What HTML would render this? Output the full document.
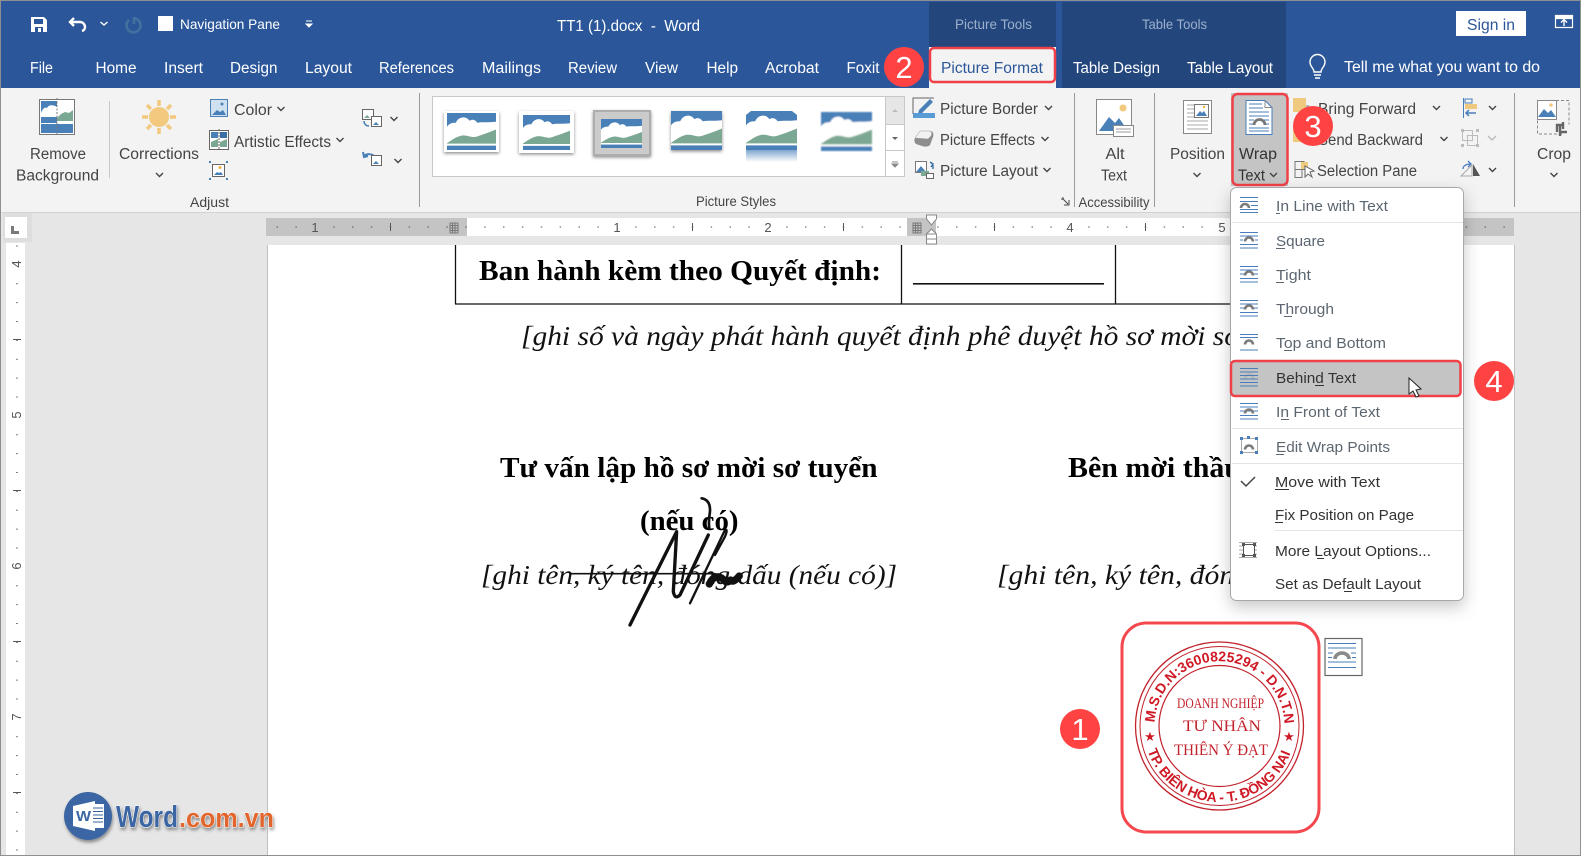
<!DOCTYPE html>
<html><head><meta charset="utf-8"><title>TT1 (1).docx - Word</title>
<style>
html,body{margin:0;padding:0;background:#e6e6e6;overflow:hidden}
svg{display:block}
text{font-family:"Liberation Sans",sans-serif;font-size:15px;fill:#444}
.tab{fill:#fff;font-size:15.5px}
.rb{fill:#444;font-size:15.5px}
.m{fill:#5c6670;font-size:15px}
.d{fill:#333;font-size:15px}
.grp{fill:#444;font-size:14px}
.num{fill:#555;font-size:13px}
.doc{font-family:"Liberation Serif",serif;fill:#000;font-weight:bold;font-size:29px}
.it{font-family:"Liberation Serif",serif;fill:#111;font-style:italic;font-size:27px}
.bd{fill:#fff;font-size:31px;text-anchor:middle}
.st{font-family:"Liberation Serif",serif;fill:#c2222c}
.sa{fill:#cf1a26;font-weight:bold;font-size:14px}
</style></head><body>
<svg width="1581" height="856" viewBox="0 0 1581 856" xmlns="http://www.w3.org/2000/svg">
<defs>
<symbol id="ch" viewBox="0 0 9 6" overflow="visible"><path d="M1 1l3.5 3.5L8 1" fill="none" stroke="#444" stroke-width="1.4"/></symbol>
<symbol id="th" viewBox="0 0 50 38" preserveAspectRatio="none">
<rect width="50" height="38" fill="#4a80b8"/>
<path fill="#fff" d="M0 14C3 10 6 10 9 10C12 3 20 3 23 8C26 6 29 7 31 10C36 9 42 10 50 9V34H0Z"/>
<path fill="#7ba892" d="M0 31C6 27 10 24 16 23C22 23 26 26 31 24C37 22 43 20 50 17V31.5H0Z"/>
<rect y="33.5" width="50" height="4.5" fill="#4a80b8"/>
</symbol>
<filter id="sh" x="-20%" y="-20%" width="140%" height="150%"><feDropShadow dx="0" dy="1.5" stdDeviation="1.5" flood-color="#000" flood-opacity=".45"/></filter>
<filter id="bl" x="-20%" y="-20%" width="140%" height="140%"><feGaussianBlur stdDeviation=".9"/></filter>
<filter id="menu" x="-15%" y="-10%" width="130%" height="125%"><feDropShadow dx="0" dy="6" stdDeviation="8" flood-color="#000" flood-opacity=".22"/></filter>
<filter id="ls" x="-10%" y="-20%" width="120%" height="160%"><feDropShadow dx="1" dy="2.5" stdDeviation="1.6" flood-color="#000" flood-opacity=".4"/></filter>
<linearGradient id="rf" x1="0" y1="0" x2="0" y2="1"><stop offset="0" stop-color="#7fa6cf"/><stop offset="1" stop-color="#fff"/></linearGradient>
<path id="arch" d="M5 11.5a4 4 0 0 1 8 0" fill="none" stroke="#7b7b7b" stroke-width="2.6"/>
<path id="top" d="M0 3.5h18M0 7h18" stroke="#4a7ebb" stroke-width="1" fill="none"/>
<path id="bot" d="M0 15.5h18M0 19h18" stroke="#4a7ebb" stroke-width="1" fill="none"/>
<path id="tarc" d="M1154.6 722.600A65 65 0 0 1 1284.400 722.600" fill="none"/>
<path id="barc" d="M1147.6 750.7A76 76 0 0 0 1291.4 750.7" fill="none"/>
</defs>

<!-- base -->
<rect width="1581" height="856" fill="#e6e6e6"/>
<rect width="1581" height="88" fill="#2b579a"/>
<rect y="88" width="1581" height="124" fill="#f3f3f3"/>
<rect y="212" width="1581" height="1" fill="#d2d2d2"/>

<!-- context tabs -->
<rect x="929" y="2" width="127" height="45" fill="#23467d"/>
<rect x="1062" y="2" width="224" height="86" fill="#23467d"/>
<rect x="929" y="47" width="127" height="42" fill="#f3f3f3"/>
<text x="955" y="29" textLength="77" lengthAdjust="spacingAndGlyphs" style="fill:#9db0cc;font-size:14px">Picture Tools</text>
<text x="1142" y="29" textLength="65" lengthAdjust="spacingAndGlyphs" style="fill:#9db0cc;font-size:14px">Table Tools</text>

<!-- QAT -->
<path d="M31 17h13l3 3v12H31z" fill="#fff"/><rect x="34" y="19" width="9" height="5" fill="#2b579a"/><rect x="35" y="27" width="8" height="5" fill="#2b579a"/><rect x="38" y="28" width="3" height="4" fill="#fff"/>
<path d="M74 18l-4 4 4 4M70 22h10a5 5 0 0 1 5 5 4 4 0 0 1-3 4" fill="none" stroke="#fff" stroke-width="2.4"/>
<path d="M100.500 22l3.500 3 3.500-3" fill="none" stroke="#fff" stroke-width="1.400"/>
<path d="M135 18.500a7 7 0 1 1-6 1.500M134 17v7" fill="none" stroke="#44709f" stroke-width="2.600"/>
<rect x="158" y="16" width="15" height="15" fill="#fff"/>
<text x="180" y="29" textLength="100" lengthAdjust="spacingAndGlyphs" style="fill:#fff;font-size:14px">Navigation Pane</text>
<path d="M306 21h6M306 24h6l-3 3z" stroke="#fff" fill="#fff" stroke-width="1"/>
<text x="557" y="31" textLength="143" lengthAdjust="spacingAndGlyphs" style="fill:#fff;font-size:16px">TT1 (1).docx&#160;&#160;-&#160;&#160;Word</text>

<!-- tabs -->
<text class="tab" x="30" y="73" textLength="23" lengthAdjust="spacingAndGlyphs">File</text>
<text class="tab" x="95.500" y="73" textLength="41" lengthAdjust="spacingAndGlyphs">Home</text>
<text class="tab" x="164" y="73" textLength="39" lengthAdjust="spacingAndGlyphs">Insert</text>
<text class="tab" x="230" y="73" textLength="47.500" lengthAdjust="spacingAndGlyphs">Design</text>
<text class="tab" x="305" y="73" textLength="47" lengthAdjust="spacingAndGlyphs">Layout</text>
<text class="tab" x="379" y="73" textLength="75" lengthAdjust="spacingAndGlyphs">References</text>
<text class="tab" x="482" y="73" textLength="59" lengthAdjust="spacingAndGlyphs">Mailings</text>
<text class="tab" x="568" y="73" textLength="49" lengthAdjust="spacingAndGlyphs">Review</text>
<text class="tab" x="645" y="73" textLength="33" lengthAdjust="spacingAndGlyphs">View</text>
<text class="tab" x="706.500" y="73" textLength="31.500" lengthAdjust="spacingAndGlyphs">Help</text>
<text class="tab" x="765" y="73" textLength="54" lengthAdjust="spacingAndGlyphs">Acrobat</text>
<text class="tab" x="846.500" y="73" textLength="33" lengthAdjust="spacingAndGlyphs">Foxit</text>
<text x="941" y="73" textLength="102" lengthAdjust="spacingAndGlyphs" style="fill:#2b579a;font-size:15.5px">Picture Format</text>
<text class="tab" x="1073" y="73" textLength="87" lengthAdjust="spacingAndGlyphs">Table Design</text>
<text class="tab" x="1187" y="73" textLength="86" lengthAdjust="spacingAndGlyphs">Table Layout</text>
<rect x="930" y="48" width="125" height="34" rx="4" fill="none" stroke="#f04048" stroke-width="2.500"/>

<!-- sign in etc -->
<rect x="1456" y="11" width="70" height="25" fill="#fff"/>
<text x="1467" y="30" textLength="48" lengthAdjust="spacingAndGlyphs" style="fill:#2b579a;font-size:16px">Sign in</text>
<path d="M1555.500 15.500h17v12h-17zM1555.500 18.500h17" fill="none" stroke="#fff" stroke-width="1.200"/><path d="M1564 26v-6M1561 22.500l3-3 3 3" fill="none" stroke="#fff" stroke-width="1.400"/><rect x="1555" y="15" width="18" height="3" fill="#fff"/>
<path d="M1314 72c0-4-4-5-4-10a7.500 7.500 0 0 1 15 0c0 5-4 6-4 10zM1314 75h7M1315 78h5" fill="none" stroke="#fff" stroke-width="1.400"/>
<text x="1344" y="72" textLength="196" lengthAdjust="spacingAndGlyphs" style="fill:#fff;font-size:15.500px">Tell me what you want to do</text>

<!-- Adjust group -->
<rect x="39.500" y="99.500" width="35" height="35" fill="#fff" stroke="#777"/>
<rect x="41" y="101" width="16" height="22" fill="#4a80b8"/><path d="M41 113c2-5 4-6 6-5 2-4 7-3 10-1v10H41z" fill="#fff"/>
<path d="M57 118l4-4 4-2 4 1 4-3v11H57z" fill="#7ba892"/><rect x="41" y="124" width="32" height="9" fill="#4a80b8"/>
<path d="M57 98v38" stroke="#777" stroke-dasharray="2 1.500"/>
<text class="rb" x="30" y="159" textLength="56" lengthAdjust="spacingAndGlyphs">Remove</text>
<text class="rb" x="16" y="180.500" textLength="83" lengthAdjust="spacingAndGlyphs">Background</text>
<rect x="109" y="101" width="1" height="77" fill="#c8c8c8"/>
<circle cx="159" cy="117" r="10" fill="#f2c97e"/>
<path d="M159 100v6M159 128v6M142 117h6M170 117h6M147 105l4 4M171 105l-4 4M147 129l4-4M171 129l-4-4" stroke="#f2c97e" stroke-width="3.500"/>
<text class="rb" x="119" y="159" textLength="80" lengthAdjust="spacingAndGlyphs">Corrections</text>
<use href="#ch" x="155" y="172" width="9" height="6"/>
<rect x="210.500" y="99.500" width="17" height="17" fill="#cfe0f0" stroke="#4a80b8"/><path d="M212 115l5-5 3 2 3-2 3 5z" fill="#4a80b8"/><circle cx="222" cy="104" r="1.500" fill="#4a80b8"/>
<text class="rb" x="234" y="115" textLength="38" lengthAdjust="spacingAndGlyphs">Color</text>
<use href="#ch" x="276.500" y="106" width="9" height="6"/>
<rect x="209.500" y="130.500" width="19" height="19" fill="#fff" stroke="#666"/><path d="M211 132h7v6h-7z" fill="#4a80b8"/><path d="M211 142l7-3v8h-7z" fill="#7ba892"/><path d="M220 132h7v6h-7z" fill="#3a6fa5"/><path d="M220 142l7-3v8h-7z" fill="#7ba892"/><path d="M219 129v21" stroke="#666" stroke-dasharray="2 1"/>
<text class="rb" x="234" y="147" textLength="97" lengthAdjust="spacingAndGlyphs">Artistic Effects</text>
<use href="#ch" x="335.500" y="137" width="9" height="6"/>
<rect x="212.500" y="164.500" width="12" height="12" fill="#fff" stroke="#666"/><path d="M214 175l3-3 2 1 2-1 2 3z" fill="#4a80b8"/><circle cx="220" cy="167.500" r="1.500" fill="#f2b040"/>
<path d="M209 161h2v2h-2zM226 161h2v2h-2zM209 178h2v2h-2zM226 178h2v2h-2z" fill="#4a80b8"/>
<text class="grp" x="190" y="207" textLength="39" lengthAdjust="spacingAndGlyphs">Adjust</text>
<rect x="362.500" y="109.500" width="11" height="10" fill="#fff" stroke="#666"/><rect x="371.500" y="116.500" width="10" height="10" fill="#fff" stroke="#666"/><path d="M364 118l3-3 3 3z" fill="#7ba892"/><path d="M373 125l3-3 3 3z" fill="#4a80b8"/><path d="M364 121c0 3 2 5 5 5" fill="none" stroke="#4a80b8" stroke-width="1.500"/>
<use href="#ch" x="389.500" y="116" width="9" height="6"/>
<path d="M364 156a7 6 0 0 1 11 1M363 152l1 5 4-1" fill="none" stroke="#4a80b8" stroke-width="2"/><rect x="371.500" y="155.500" width="10" height="10" fill="#fff" stroke="#666"/><path d="M373 164l3-3 3 3z" fill="#4a80b8"/>
<use href="#ch" x="393.500" y="158" width="9" height="6"/>
<rect x="419" y="93" width="1" height="114" fill="#9a9a9a"/>

<!-- gallery -->
<rect x="432.500" y="96.500" width="472" height="80" fill="#fff" stroke="#c8c8c8"/>
<rect x="885.500" y="96.500" width="19" height="28" fill="#e6e6e6" stroke="#c8c8c8"/>
<rect x="885.500" y="124.500" width="19" height="26" fill="#fff" stroke="#c8c8c8"/>
<rect x="885.500" y="150.500" width="19" height="26" fill="#fff" stroke="#c8c8c8"/>
<path d="M892 112l3-3 3 3z" fill="#bdbdbd"/><path d="M892 137h6l-3 3z" fill="#666"/><path d="M892 162h6M892 164h6l-3 3z" stroke="#888" fill="#888" stroke-width="1"/>
<rect x="444" y="111" width="55" height="41" fill="#fff" filter="url(#sh)"/><use href="#th" x="447" y="113" width="49" height="37"/>
<rect x="519" y="111" width="55" height="42" fill="#fff" filter="url(#sh)"/><use href="#th" x="523" y="115" width="47" height="35"/>
<rect x="594" y="111" width="56" height="44" fill="#cbcbcb" stroke="#adadad" stroke-width="2" filter="url(#sh)"/><use href="#th" x="601" y="119" width="41" height="29"/>
<g filter="url(#sh)"><use href="#th" x="671" y="111" width="51" height="39"/></g>
<rect x="746" y="150" width="51" height="12" fill="url(#rf)"/>
<use href="#th" x="746" y="111" width="51" height="39"/><path d="M746 111h5l-5 4zM797 111h-5l5 4z" fill="#fff"/>
<g filter="url(#bl)"><use href="#th" x="821" y="112" width="51" height="39"/></g>

<!-- picture styles buttons -->
<path d="M913 114v-16h21" fill="none" stroke="#666"/><path d="M919 110l11-11 3 3-11 11-4 1z" fill="#4a80b8"/><rect x="913" y="113" width="22" height="5" fill="#5b9bd5"/>
<text class="rb" x="940" y="114" textLength="98" lengthAdjust="spacingAndGlyphs">Picture Border</text>
<use href="#ch" x="1044" y="105" width="9" height="6"/>
<path d="M920 131h10c3 0 4 3 3 6l-3 8c-2 2-5 2-8 1l-6-2c-2-2-2-4-1-6z" fill="#8e8e8e"/><path d="M920 131h10c2 1 2 3 1 5l-3 3-13-1z" fill="#f2f2f2" stroke="#999" stroke-width=".5"/>
<text class="rb" x="940" y="145" textLength="95" lengthAdjust="spacingAndGlyphs">Picture Effects</text>
<use href="#ch" x="1040.500" y="136" width="9" height="6"/>
<rect x="915.500" y="161.500" width="11" height="11" fill="#fff" stroke="#777"/><path d="M916 172l5-6 5 6z" fill="#4a80b8"/><rect x="921" y="171" width="8" height="5" fill="#7ba892"/><rect x="926.500" y="173.500" width="7" height="5" fill="#fff" stroke="#666"/><path d="M930 162l3 2-2 3M933 165v4" fill="none" stroke="#3a6fa5" stroke-width="1.400"/>
<text class="rb" x="940" y="176" textLength="98" lengthAdjust="spacingAndGlyphs">Picture Layout</text>
<use href="#ch" x="1042.500" y="167" width="9" height="6"/>
<text class="grp" x="696" y="206" textLength="80" lengthAdjust="spacingAndGlyphs">Picture Styles</text>
<path d="M1062 198h2M1062 198v2M1063 199l5 5M1069 200v5h-5" fill="none" stroke="#444"/>
<rect x="1074" y="93" width="1" height="114" fill="#9a9a9a"/>
<text class="grp" x="1078.500" y="207" textLength="71" lengthAdjust="spacingAndGlyphs">Accessibility</text>
<rect x="1154" y="93" width="1" height="114" fill="#9a9a9a"/>

<!-- alt text -->
<rect x="1096.500" y="99.500" width="35" height="35" fill="#fff" stroke="#888"/><circle cx="1123" cy="108" r="3.500" fill="#f2c97e"/><path d="M1099 131l10-14 6 6 4-5 9 13z" fill="#4a80b8"/>
<rect x="1113.500" y="125.500" width="20" height="11" fill="#fff" stroke="#888"/><path d="M1116 129h15M1116 132h15" stroke="#999"/>
<text class="rb" x="1105.500" y="159" textLength="19" lengthAdjust="spacingAndGlyphs">Alt</text>
<text class="rb" x="1101" y="180.500" textLength="26" lengthAdjust="spacingAndGlyphs">Text</text>

<!-- position -->
<rect x="1183.500" y="100.500" width="28" height="33" fill="#fff" stroke="#888"/><path d="M1187 105h8M1187 109h8M1187 113h8M1187 117h8M1187 121h21M1187 125h21M1187 129h21" stroke="#aaa"/><rect x="1194.500" y="104.500" width="14" height="13" fill="#fff" stroke="#777"/><path d="M1196 116l4-5 2 2 2-2 3 5z" fill="#4a80b8"/><circle cx="1204" cy="107" r="1.200" fill="#f2b040"/>
<text class="rb" x="1170" y="159" textLength="55" lengthAdjust="spacingAndGlyphs">Position</text>
<use href="#ch" x="1192.500" y="172" width="9" height="6"/>

<!-- wrap text -->
<rect x="1231" y="93" width="57" height="93" fill="#c4c4c4"/>
<path d="M1246 100.500h19l7 7v27h-26z" fill="#fff" stroke="#4a7ebb"/><path d="M1265 100.500v7h7" fill="none" stroke="#888"/>
<path d="M1249 104h13M1249 108h14M1249 112h20M1249 116h20M1249 120h5M1264 120h5M1249 124h4M1265 124h4M1249 128h20M1249 131h20" stroke="#4a7ebb"/>
<path d="M1254 125a5.500 5.500 0 0 1 11 0" fill="none" stroke="#777" stroke-width="2.800"/>
<text class="rb" x="1239" y="159" textLength="38" lengthAdjust="spacingAndGlyphs" style="fill:#333">Wrap</text>
<text class="rb" x="1238" y="180.500" textLength="27" lengthAdjust="spacingAndGlyphs" style="fill:#333">Text</text>
<use href="#ch" x="1269" y="172" width="9" height="6"/>
<rect x="1232.500" y="94" width="55" height="91" rx="5" fill="none" stroke="#f04048" stroke-width="2.500"/>

<!-- arrange -->
<rect x="1293" y="98" width="13" height="14" fill="#eec97e"/><path d="M1306 106h3" stroke="#777"/>
<rect x="1293" y="128" width="13" height="14" fill="#eec97e"/><path d="M1301 131h9v10h-9z" fill="none" stroke="#777"/>
<text class="rb" x="1318" y="114" textLength="98" lengthAdjust="spacingAndGlyphs">Bring Forward</text>
<use href="#ch" x="1432" y="105" width="9" height="6"/>
<text class="rb" x="1318" y="145" textLength="105" lengthAdjust="spacingAndGlyphs">Send Backward</text>
<use href="#ch" x="1439.500" y="136" width="9" height="6"/>
<path d="M1295 161.500h9v8h-9zM1295 169.500h7v8h-7z" fill="none" stroke="#777"/><rect x="1301" y="162" width="7" height="7" fill="#eec97e"/><path d="M1305 166v11l3-3 4 3-2-5 4-1z" fill="#fff" stroke="#666"/>
<text class="rb" x="1317" y="176" textLength="100" lengthAdjust="spacingAndGlyphs">Selection Pane</text>
<path d="M1463.500 98v20M1465 99h7v4h-7z" fill="none" stroke="#4a7ebb"/><rect x="1465" y="104" width="12" height="5" fill="#eec97e"/><path d="M1466 113h10M1469 110l-3 3 3 3" fill="none" stroke="#4a7ebb" stroke-width="1.500"/>
<use href="#ch" x="1488" y="105" width="9" height="6"/>
<rect x="1462.500" y="130.500" width="10" height="10" fill="none" stroke="#bbb"/><rect x="1467.500" y="135.500" width="10" height="10" fill="none" stroke="#bbb"/><path d="M1461 129h3v3h-3zM1476 129h3v3h-3zM1461 144h3v3h-3zM1476 144h3v3h-3z" fill="#bbb"/>
<path d="M1488 136l4 4 4-4" fill="none" stroke="#bbb" stroke-width="1.400"/>
<path d="M1461 176l11-11v11z" fill="none" stroke="#aaa"/><path d="M1473 164l7 12h-7z" fill="#555"/><path d="M1463 169c0-3 3-5 7-5M1468 161l3 3-3 3" fill="none" stroke="#4a7ebb" stroke-width="1.300"/>
<use href="#ch" x="1488" y="167" width="9" height="6"/>
<rect x="1514" y="93" width="1" height="114" fill="#9a9a9a"/>
<rect x="1537.500" y="100.500" width="19" height="19" fill="#fff" stroke="#888"/><path d="M1538 117l6-8 4 4 3-3 5 7z" fill="#4a80b8"/><circle cx="1551" cy="105" r="1.800" fill="#f2c97e"/>
<path d="M1556 100.500h13v24M1562 134h-24.500v-14" fill="none" stroke="#888" stroke-dasharray="3 2"/>
<path d="M1563 125h-6v7M1560 125v7h7M1563 122v7M1560 132v4" fill="none" stroke="#666" stroke-width="2.400"/>
<text class="rb" x="1537" y="159" textLength="34" lengthAdjust="spacingAndGlyphs">Crop</text>
<use href="#ch" x="1549.500" y="172" width="9" height="6"/>

<!-- rulers -->
<rect x="3" y="213" width="29" height="29" fill="#dedede"/><rect x="5" y="217" width="22" height="21" fill="#fff"/><path d="M11 226h3v5h5v3h-8z" fill="#7a7a7a"/>
<rect x="266" y="218" width="1248" height="18" fill="#c4c4c4"/>
<rect x="467" y="218" width="440" height="18" fill="#fff"/>
<rect x="936" y="218" width="304" height="18" fill="#fff"/>
<path d="M276.500 227H1514" stroke="#555" stroke-width="1" stroke-dasharray="1.500 17.375" fill="none"/>
<path d="M390.500 223v8M692.500 223v8M843.500 223v8M994.500 223v8M1145.500 223v8" stroke="#555"/>
<rect x="309" y="220" width="12" height="14" fill="#c4c4c4"/><rect x="611" y="220" width="12" height="14" fill="#fff"/><rect x="762" y="220" width="12" height="14" fill="#fff"/><rect x="1064" y="220" width="12" height="14" fill="#fff"/><rect x="1216" y="220" width="12" height="14" fill="#fff"/>
<text class="num" x="315" y="232" text-anchor="middle">1</text><text class="num" x="617" y="232" text-anchor="middle">1</text><text class="num" x="768" y="232" text-anchor="middle">2</text><text class="num" x="1070" y="232" text-anchor="middle">4</text><text class="num" x="1222" y="232" text-anchor="middle">5</text>
<path d="M450 223h8v10h-8zM450 225.500h8M450 228h8M450 230.500h8M452.500 223v10M455 223v10" fill="none" stroke="#666" stroke-width=".8"/>
<rect x="907" y="218" width="19" height="18" fill="#c4c4c4"/><path d="M913 223h8v10h-8zM913 225.500h8M913 228h8M913 230.500h8M915.500 223v10M918 223v10" fill="none" stroke="#666" stroke-width=".8"/>
<rect x="6" y="243" width="19" height="613" fill="#fff"/>
<path d="M17 245V856" stroke="#555" stroke-width="1.500" stroke-dasharray="1 17.875" stroke-dashoffset="-.5"/>
<rect x="8" y="258" width="16" height="12" fill="#fff"/><rect x="8" y="409" width="16" height="12" fill="#fff"/><rect x="8" y="560" width="16" height="12" fill="#fff"/><rect x="8" y="711" width="16" height="12" fill="#fff"/>
<path d="M13 339.500h8M13 490.500h8M13 641.500h8M13 792.500h8" stroke="#555"/>
<text class="num" text-anchor="middle" transform="translate(21,264) rotate(-90)">4</text><text class="num" text-anchor="middle" transform="translate(21,415) rotate(-90)">5</text><text class="num" text-anchor="middle" transform="translate(21,566) rotate(-90)">6</text><text class="num" text-anchor="middle" transform="translate(21,717) rotate(-90)">7</text>

<!-- page -->
<rect x="267" y="245" width="1248" height="610" fill="#fff"/>
<rect x="267" y="245" width="1" height="610" fill="#c0c0c0"/>
<rect x="1514" y="245" width="1" height="610" fill="#c0c0c0"/>
<path d="M455.500 245v59M901.500 245v59M1115.500 245v59M455 304h785" stroke="#111" stroke-width="1.300" fill="none"/>
<path d="M926.500 215h10v4l-5 6-5-6zM931.500 229l5 5v5h-10v-5zM926.500 234h10" fill="#fff" stroke="#888"/><rect x="926.500" y="239" width="10" height="5" fill="#fff" stroke="#888"/>
<text class="doc" x="479" y="280" textLength="402" lengthAdjust="spacingAndGlyphs">Ban hành kèm theo Quyết định:</text>
<rect x="913" y="283" width="191" height="1.600" fill="#111"/>
<text class="it" x="521" y="345" textLength="719" lengthAdjust="spacingAndGlyphs">[ghi số và ngày phát hành quyết định phê duyệt hồ sơ mời sơ</text>
<text class="doc" x="500" y="477" textLength="377.500" lengthAdjust="spacingAndGlyphs">Tư vấn lập hồ sơ mời sơ tuyển</text>
<text class="doc" x="1068" y="477" textLength="173" lengthAdjust="spacingAndGlyphs">Bên mời thầu</text>
<text class="doc" x="640" y="530" textLength="98.500" lengthAdjust="spacingAndGlyphs">(nếu có)</text>
<text class="it" x="481" y="584" textLength="416" lengthAdjust="spacingAndGlyphs">[ghi tên, ký tên, đóng dấu (nếu có)]</text>
<text class="it" x="997" y="584" textLength="252" lengthAdjust="spacingAndGlyphs">[ghi tên, ký tên, đóng</text>

<!-- signature -->
<g transform="translate(460,440) scale(.3333)" fill="none" stroke="#111" stroke-linecap="round" stroke-linejoin="round">
<path d="M510 555L650 275L640 455Q645 480 660 465L745 285" stroke-width="10"/>
<path d="M690 490L795 270Q805 265 795 290L765 345" stroke-width="7"/>
<path d="M725 175Q752 180 750 215Q745 245 748 265" stroke-width="8"/>
<path d="M330 401L765 401" stroke-width="5"/>
<path d="M748 432Q765 398 790 418Q800 432 812 420Q820 430 838 408" stroke-width="22"/>
</g>

<!-- stamp -->
<rect x="1122" y="623" width="197" height="209" rx="24" fill="#fff" stroke="#f4484e" stroke-width="3"/>
<circle cx="1219.500" cy="726" r="84" fill="none" stroke="#c2222c" stroke-width="1.300"/>
<circle cx="1219.500" cy="726" r="79.500" fill="none" stroke="#c2222c" stroke-width="1"/>
<circle cx="1219.500" cy="726" r="60.500" fill="none" stroke="#c2222c" stroke-width="1.200"/>
<text class="sa"><textPath href="#tarc" textLength="198" lengthAdjust="spacing">M.S.D.N:3600825294 - D.N.T.N</textPath></text>
<text class="sa"><textPath href="#barc" textLength="186" lengthAdjust="spacing">TP. BIÊN HÒA - T. ĐỒNG NAI</textPath></text>
<text x="1150" y="741" text-anchor="middle" style="fill:#cf1a26;font-size:13px">★</text>
<text x="1289" y="741" text-anchor="middle" style="fill:#cf1a26;font-size:13px">★</text>
<text class="st" x="1177" y="708" textLength="87" lengthAdjust="spacingAndGlyphs" style="font-size:15px">DOANH NGHIỆP</text>
<text class="st" x="1183" y="731" textLength="78" lengthAdjust="spacingAndGlyphs" style="font-size:16px">TƯ NHÂN</text>
<text class="st" x="1174" y="755" textLength="94" lengthAdjust="spacingAndGlyphs" style="font-size:16px">THIÊN Ý ĐẠT</text>

<!-- small wrap button -->
<rect x="1325" y="638.500" width="37" height="37" fill="#fff" stroke="#666" stroke-width="1.200"/>
<path d="M1328 643.500h28M1328 648h28M1328 653h5M1351 653h5M1328 657.500h4M1352 657.500h4M1328 662h28M1328 667.500h28" stroke="#4a7ebb"/>
<path d="M1335 659a7 6 0 0 1 14 0" fill="none" stroke="#8a8a8a" stroke-width="3.600"/>

<!-- logo -->
<g filter="url(#ls)"><circle cx="88" cy="816" r="24" fill="#3a66a3"/></g>
<path d="M73 806l22-5v30l-22-5z" fill="#fff"/><rect x="92" y="804" width="12" height="24" fill="#fff"/><path d="M93 808h10M93 811.500h10M93 815h10M93 818.500h10M93 822h10" stroke="#3a66a3"/>
<text x="76" y="821" textLength="15" lengthAdjust="spacingAndGlyphs" style="fill:#3a66a3;font-weight:bold;font-size:15px">W</text>
<g filter="url(#ls)">
<text x="116" y="827" textLength="62" lengthAdjust="spacingAndGlyphs" style="fill:#3a66a3;font-weight:bold;font-size:31px;stroke:#fff;stroke-width:1px;paint-order:stroke">Word</text>
<text x="179" y="827" textLength="95" lengthAdjust="spacingAndGlyphs" style="fill:#e2652d;font-weight:bold;font-size:27px;stroke:#fff;stroke-width:1px;paint-order:stroke">.com.vn</text>
</g>

<!-- menu -->
<rect x="1230.500" y="187.500" width="233" height="413" rx="6" fill="#fff" stroke="#a8a8a8" filter="url(#menu)"/>
<path d="M1232 222.500h231M1232 428.500h231M1232 463.500h231M1275 530.500h188" stroke="#e4e4e4"/>
<!-- items icons -->
<g transform="translate(1240,194)"><path d="M0 3.500h18M0 7.500h18M11 11.500h7M0 15.500h18M0 18.500h18" stroke="#4a7ebb" fill="none"/><path d="M1 14a4 4 0 0 1 8 0" fill="none" stroke="#7b7b7b" stroke-width="2.600"/></g>
<g transform="translate(1240,229)"><use href="#top"/><use href="#bot"/><path d="M0 11h3M15 11h3" stroke="#4a7ebb"/><use href="#arch" y="1"/></g>
<g transform="translate(1240,263)"><use href="#top"/><use href="#bot"/><path d="M0 11h4M14 11h4" stroke="#4a7ebb"/><use href="#arch" y="1"/></g>
<g transform="translate(1240,297)"><use href="#top"/><use href="#bot"/><path d="M0 11h4M14 11h4" stroke="#4a7ebb"/><use href="#arch" y="1"/></g>
<g transform="translate(1240,331)"><path d="M0 3.500h18M0 6.500h18M0 19h18" stroke="#4a7ebb"/><use href="#arch" y="2"/></g>
<rect x="1231" y="361" width="229.500" height="35" fill="#c4c4c4"/>
<g transform="translate(1240,365)"><use href="#arch" y="2" opacity=".2"/><path d="M0 3.500h18M0 7h18M0 10.500h18M0 14h18M0 17.500h18M0 21h18" stroke="#4a7ebb"/></g>
<g transform="translate(1240,400)"><path d="M0 3.500h18M0 7h18M0 11h18M0 15.500h18M0 19h18" stroke="#4a7ebb"/><use href="#arch" y="2" style="stroke:#555"/></g>
<g transform="translate(1240,436)"><rect x="1.500" y="2.500" width="16" height="14" fill="none" stroke="#aaa"/><path d="M0 1h3v3H0zM15 1h3v3h-3zM0 15h3v3H0zM15 15h3v3h-3zM7 0h3v3H7z" fill="#4a7ebb"/><use href="#arch" y="2"/></g>
<path d="M1241 481l5 5 9-9" fill="none" stroke="#444" stroke-width="1.500"/>
<g transform="translate(1239,541)"><path d="M0 1.500h18M0 5h18M0 9h18M0 13h18M0 16.500h18" stroke="#aaa"/><rect x="4.500" y="3.500" width="11" height="11" fill="#fff" stroke="#555"/><path d="M3 2h3v3H3zM14 2h3v3h-3zM3 13h3v3H3zM14 13h3v3h-3z" fill="#555"/></g>
<!-- items text -->
<text class="m" x="1276" y="211" textLength="112" lengthAdjust="spacingAndGlyphs">In Line with Text</text>
<text class="m" x="1276" y="246" textLength="49" lengthAdjust="spacingAndGlyphs">Square</text>
<text class="m" x="1276" y="280" textLength="35" lengthAdjust="spacingAndGlyphs">Tight</text>
<text class="m" x="1276" y="314" textLength="58" lengthAdjust="spacingAndGlyphs">Through</text>
<text class="m" x="1276" y="348" textLength="110" lengthAdjust="spacingAndGlyphs">Top and Bottom</text>
<text class="d" x="1276" y="383" textLength="80" lengthAdjust="spacingAndGlyphs">Behind Text</text>
<text class="m" x="1276" y="417" textLength="104" lengthAdjust="spacingAndGlyphs">In Front of Text</text>
<text class="m" x="1276" y="452" textLength="114" lengthAdjust="spacingAndGlyphs">Edit Wrap Points</text>
<text class="d" x="1275" y="487" textLength="105" lengthAdjust="spacingAndGlyphs">Move with Text</text>
<text class="d" x="1275" y="520" textLength="139" lengthAdjust="spacingAndGlyphs">Fix Position on Page</text>
<text class="d" x="1275" y="556" textLength="156" lengthAdjust="spacingAndGlyphs">More Layout Options...</text>
<text class="d" x="1275" y="589" textLength="146" lengthAdjust="spacingAndGlyphs">Set as Default Layout</text>
<path d="M1276 213.500h4M1276 248.500h9M1276 282.500h8M1284 316.500h8M1284 350.500h8M1281 419.500h8M1276 454.500h8" stroke="#5c6670"/>
<path d="M1315 385.500h9M1275 489.500h14M1275 522.500h8M1317 558.500h7M1344 591.500h8" stroke="#333"/>
<rect x="1231" y="361" width="229.500" height="35" rx="4" fill="none" stroke="#f04048" stroke-width="2.500"/>
<path d="M1409 378v16l4-3 3 6 3-1-3-6 5-1z" fill="#fff" stroke="#222"/>

<!-- badges -->
<circle cx="904" cy="67" r="20" fill="#ff4343"/><text class="bd" x="904" y="78">2</text>
<circle cx="1313" cy="126" r="20" fill="#ff4343"/><text class="bd" x="1313" y="137">3</text>
<circle cx="1494" cy="381" r="20" fill="#ff4343"/><text class="bd" x="1494" y="392">4</text>
<circle cx="1080" cy="729" r="20" fill="#ff4343"/><text class="bd" x="1080" y="740">1</text>

<!-- frame -->
<path d="M0 .5H1581M.5 0V856M0 855.500H1581M1580.500 0V856" stroke="#8f8f8f" fill="none"/>
</svg>
</body></html>
